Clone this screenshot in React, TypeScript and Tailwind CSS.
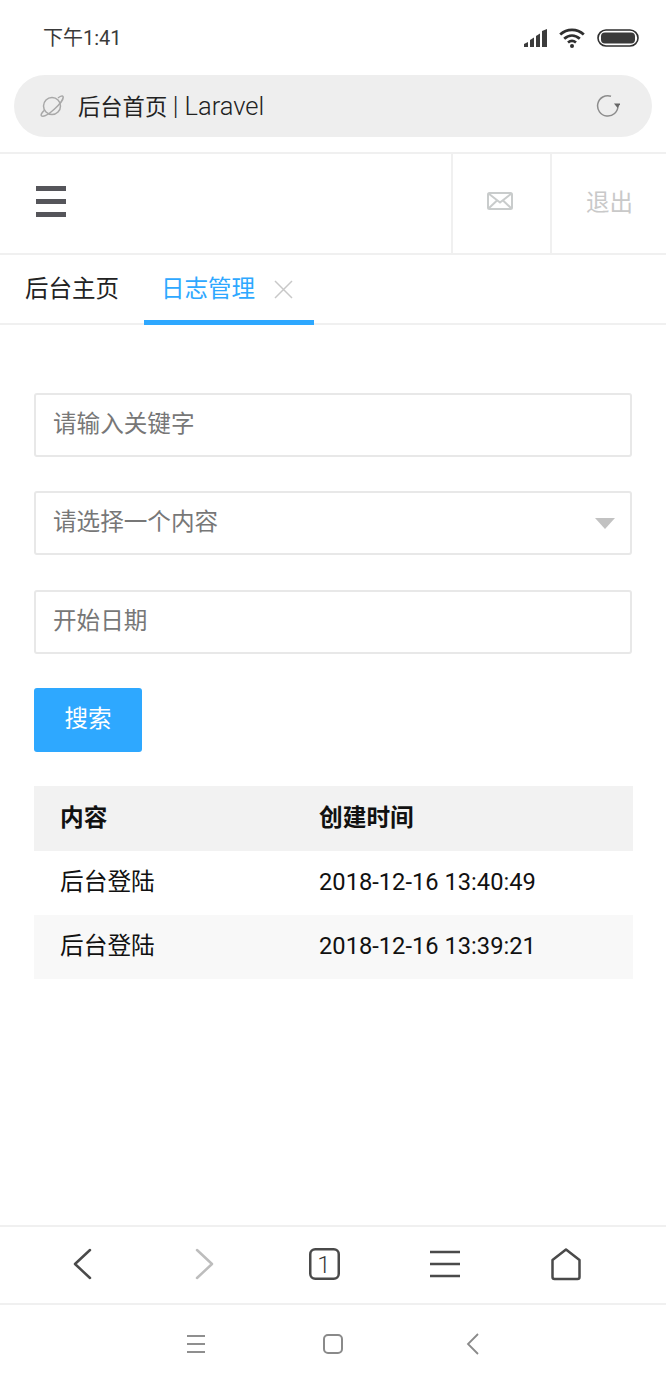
import React from "react";

const font = { fontFamily: '"Roboto","Noto Sans CJK SC",sans-serif' };

function SignalIcon() {
  return (
    <svg width="23" height="18" viewBox="0 0 23 18" fill="#3c3c3c">
      <path d="M0 18v-3l4-2v5z" />
      <path d="M6 18v-7l4-2.500V18z" />
      <path d="M12 18V7l4-2.500V18z" />
      <path d="M18 18V2l5-2v18z" />
    </svg>
  );
}

function WifiIcon() {
  return (
    <svg width="26" height="20" viewBox="0 0 26 20" fill="none" stroke="#2f2f2f" strokeWidth="2.800">
      <path d="M1.200 6.500C8 .3 18 .3 24.800 6.500" />
      <path d="M5.200 10.800C10 6.500 16 6.500 20.800 10.800" />
      <path d="M9 14.500c2.500-2 5.500-2 8 0" />
      <circle cx="13" cy="18" r="2" fill="#2f2f2f" stroke="none" />
    </svg>
  );
}

function BatteryIcon() {
  return (
    <svg width="42" height="18" viewBox="0 0 42 18">
      <rect x="1" y="1" width="40" height="16" rx="8" fill="none" stroke="#2f2f2f" strokeWidth="1.600" />
      <rect x="4" y="3.500" width="34" height="11" rx="4" fill="#3a3a3a" />
    </svg>
  );
}

function PlanetIcon() {
  return (
    <svg width="26" height="26" viewBox="0 0 26 26" fill="none" stroke="#a8a8a8" strokeWidth="1.500">
      <circle cx="13" cy="13" r="8.500" />
      <path d="M19 5c2.500-2 4.500-2.500 5-1.500 1 2-3 7.500-8.500 12.500S4.500 24 2.500 22.800c-1-.8.300-3 2.500-5.300" />
    </svg>
  );
}

function ReloadIcon() {
  return (
    <svg width="24" height="24" viewBox="0 0 24 24" fill="none">
      <path d="M15 2.200A10.200 10.200 0 1 0 22 12" stroke="#8c8c8c" strokeWidth="1.500" />
      <path d="M18 9.500h6.500l-3 4.500z" fill="#666" />
    </svg>
  );
}

function EnvelopeIcon() {
  return (
    <svg width="26" height="18" viewBox="0 0 26 18" fill="none" stroke="#c9cccc" strokeWidth="2">
      <rect x="1" y="1" width="24" height="16" rx="1.500" />
      <path d="M1.500 1.500L13 10.500l11.500-9M1.500 16.500l8.500-8M24.500 16.500l-8.500-8" />
    </svg>
  );
}

function NavIcon({ children }: { children: React.ReactNode }) {
  return (
    <svg width="40" height="40" viewBox="0 0 40 40" fill="none" strokeLinecap="round" strokeLinejoin="round">
      {children}
    </svg>
  );
}

function Field({ placeholder, arrow }: { placeholder: string; arrow?: boolean }) {
  return (
    <div className="relative h-[64px] rounded-[3px] border-2 border-[#e8e8e8] bg-white">
      <input
        readOnly
        placeholder={placeholder}
        className="h-full w-full bg-transparent pb-[2px] pl-[17px] pr-[50px] text-[23.600px] text-black outline-none placeholder:text-[#777777]"
      />
      {arrow && (
        <div className="absolute right-[15px] top-[25px] h-0 w-0 border-x-[10px] border-t-[11px] border-x-transparent border-t-[#c2c2c2]" />
      )}
    </div>
  );
}

export default function App() {
  const rows = [
    ["后台登陆", "2018-12-16 13:40:49"],
    ["后台登陆", "2018-12-16 13:39:21"],
  ];
  return (
    <div style={font} className="flex h-[1384px] w-[666px] flex-col overflow-hidden bg-white">
      {/* status bar */}
      <div className="flex h-[75px] shrink-0 items-center justify-between pl-[43px] pr-[27px]">
        <span className="text-[20px] text-[#3a3a3a]">下午1:41</span>
        <div className="flex items-center gap-[12px]">
          <SignalIcon />
          <WifiIcon />
          <BatteryIcon />
        </div>
      </div>

      {/* address bar */}
      <div className="mx-[14px] flex h-[62px] shrink-0 items-center rounded-full bg-[#eeeeee] pl-[25px] pr-[32px]">
        <PlanetIcon />
        <span className="ml-[13px] flex-1 pt-[1px] text-[22.300px] text-[#222222]">
          后台首页 <span className="text-[25.500px] font-light">| Laravel</span>
        </span>
        <ReloadIcon />
      </div>

      {/* app header */}
      <div className="mt-[15px] flex h-[103px] shrink-0 items-stretch border-y-2 border-[#f0f0f0]">
        <div className="flex flex-1 items-center pb-[5px] pl-[36px]">
          <div className="flex w-[30px] flex-col gap-[8px]">
            <div className="h-[5px] bg-[#55555a]" />
            <div className="h-[5px] bg-[#55555a]" />
            <div className="h-[5px] bg-[#55555a]" />
          </div>
        </div>
        <div className="flex w-[99px] items-center justify-center border-l-2 border-[#f0f0f0] pb-[5px] pr-[3px]">
          <EnvelopeIcon />
        </div>
        <div className="flex w-[116px] items-center justify-end border-l-2 border-[#f0f0f0] pr-[33px] text-[23.500px] text-[#c9c9c9]">
          退出
        </div>
      </div>

      {/* tabs */}
      <div className="relative flex h-[70px] shrink-0 items-stretch border-b-2 border-[#f0f0f0] text-[23.500px]">
        <div className="flex w-[144px] items-center pl-[25px] pt-[1px] text-[#222222]">后台主页</div>
        <div className="-mb-[2px] flex w-[170px] items-center border-b-[5px] border-[#2ea8ff] pl-[17px] pt-[4px] text-[#2ea8ff]">
          <span>日志管理</span>
          <svg className="ml-[19px]" width="19" height="19" viewBox="0 0 19 19" stroke="#c8c8c8" strokeWidth="1.500">
            <path d="M1 1l17 17M18 1L1 18" />
          </svg>
        </div>
      </div>

      {/* form */}
      <div className="flex flex-col gap-[34px] px-[34px] pt-[68px]">
        <Field placeholder="请输入关键字" />
        <Field placeholder="请选择一个内容" arrow />
        <div className="mt-[1px]">
          <Field placeholder="开始日期" />
        </div>
      </div>

      <div className="px-[34px] pt-[34px]">
        <button className="h-[64px] w-[108px] rounded-[3px] bg-[#2ea8ff] text-[23.500px] text-white">搜索</button>
      </div>

      {/* table */}
      <div className="pl-[34px] pr-[33px] pt-[34px]">
        <table className="w-full table-fixed border-collapse text-[23.700px] text-[#111111]">
          <colgroup>
            <col className="w-[259px]" />
            <col />
          </colgroup>
          <thead>
            <tr className="h-[65px] bg-[#f2f2f2] text-left font-bold">
              <th className="pl-[26px]">内容</th>
              <th className="pl-[26px]">创建时间</th>
            </tr>
          </thead>
          <tbody>
            {rows.map((r, i) => (
              <tr key={r[1]} className={i === 1 ? "h-[64px] bg-[#f8f8f8]" : "h-[64px]"}>
                <td className="pl-[26px]">{r[0]}</td>
                <td className="pl-[26px]">{r[1]}</td>
              </tr>
            ))}
          </tbody>
        </table>
      </div>

      <div className="flex-1" />

      {/* browser toolbar */}
      <div className="grid h-[80px] shrink-0 grid-cols-5 items-center border-y-2 border-[#f0f0f0] pl-[22.500px] pr-[39.750px]">
        <div className="flex justify-center">
          <NavIcon>
            <path d="M27 5L12 19l15 14" stroke="#4a4a4a" strokeWidth="2.500" />
          </NavIcon>
        </div>
        <div className="flex justify-center">
          <NavIcon>
            <path d="M13 5l15 14-15 14" stroke="#bdbdbd" strokeWidth="2.500" />
          </NavIcon>
        </div>
        <div className="flex justify-center">
          <NavIcon>
            <rect x="6.250" y="4.250" width="28.500" height="29.500" rx="5" stroke="#4a4a4a" strokeWidth="2.500" />
            <text x="20" y="28" textAnchor="middle" fontSize="24" fontWeight="300" fill="#3a3a3a">1</text>
          </NavIcon>
        </div>
        <div className="flex justify-center">
          <NavIcon>
            <path d="M5 7h30M5 19h30M5 31h30" stroke="#4a4a4a" strokeWidth="2.500" strokeLinecap="butt" />
          </NavIcon>
        </div>
        <div className="flex justify-center">
          <NavIcon>
            <path d="M20 4.500L6.500 15v17a2 2 0 0 0 2 2h23a2 2 0 0 0 2-2V15z" stroke="#4a4a4a" strokeWidth="2.500" />
          </NavIcon>
        </div>
      </div>

      {/* system nav */}
      <div className="flex h-[79px] shrink-0 items-center justify-center gap-[111px] pb-[1px] pl-[5px]">
        <svg width="24" height="24" viewBox="0 0 24 24" stroke="#8f8f8f" strokeWidth="2">
          <path d="M3 4h18M3 12h18M3 20h18" />
        </svg>
        <svg width="28" height="24" viewBox="0 0 28 24" fill="none" stroke="#8a8a8a" strokeWidth="2">
          <rect x="5" y="3" width="18" height="18" rx="4" />
        </svg>
        <svg className="ml-[1px]" width="28" height="24" viewBox="0 0 28 24" fill="none" stroke="#8a8a8a" strokeWidth="1.800">
          <path d="M19 2L9 12l10 10" />
        </svg>
      </div>
    </div>
  );
}
